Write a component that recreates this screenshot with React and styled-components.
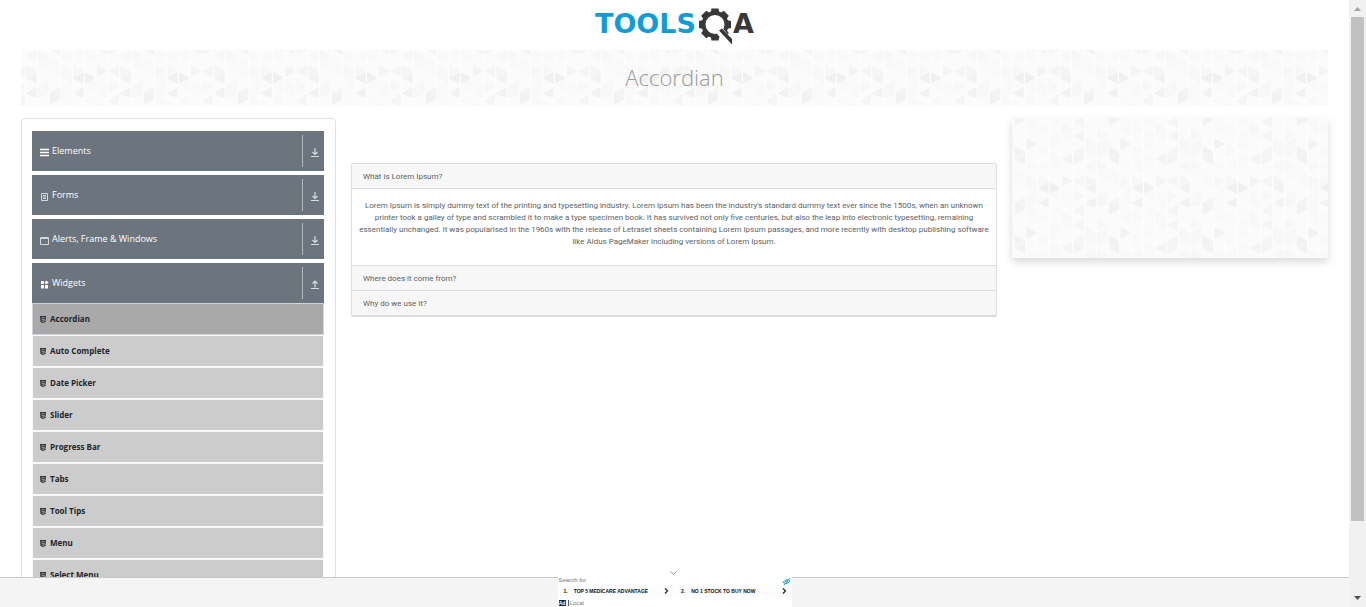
import React, { useId, useState } from "react";
import styled, { createGlobalStyle } from "styled-components";

const GlobalStyle = createGlobalStyle`
  * { box-sizing: border-box; }
  body {
    margin: 0;
    background: #fff;
    color: #212529;
    font-family: "Open Sans", "Noto Sans", sans-serif;
    font-size: 8px;
    line-height: 12px;
  }
  button { font: inherit; color: inherit; border: 0; cursor: pointer; }
  ul, ol { list-style: none; margin: 0; padding: 0; }
  a { color: inherit; text-decoration: none; }
`;

const Shell = styled.div`
  display: flex;
  flex-direction: column;
  height: 100vh;
  position: relative;
  padding-right: 17px;
`;

const Viewport = styled.div`
  flex: 1;
  min-height: 0;
  overflow: hidden;
  padding: 0 21px;
`;

const Header = styled.header`
  display: flex;
  justify-content: center;
  height: 50px;
  padding-top: 5px;
`;

const Banner = styled.div`
  position: relative;
  display: flex;
  align-items: center;
  justify-content: center;
  height: 56px;
  padding-bottom: 2px;
  margin-bottom: 12px;
`;

const Title = styled.h1`
  position: relative;
  margin: 0;
  font-size: 22px;
  line-height: 32px;
  font-weight: 300;
  color: #999;
`;

const PatternSvg = styled.svg`
  position: absolute;
  inset: 0;
  width: 100%;
  height: 100%;
`;

const Columns = styled.div`
  display: grid;
  grid-template-columns: minmax(0, 315fr) minmax(0, 646fr) minmax(0, 316fr);
  gap: 15px;
  align-items: start;
`;

const Sidebar = styled.nav`
  border: 1px solid #dee2e6;
  border-radius: 4px;
  padding: 12px 11px 12px 10px;
  display: flex;
  flex-direction: column;
  gap: 4px;
`;

const GroupButton = styled.button`
  display: flex;
  align-items: center;
  width: 100%;
  height: 40px;
  padding: 0 4px 0 8px;
  background: #6c757d;
  color: #fff;
  font-size: 9px;
  font-weight: 500;
  line-height: 16px;
  text-align: left;
`;

const GroupIcon = styled.svg`
  width: 9px;
  height: 9px;
  margin: 2px 3px 0 0;
  flex: none;
`;

const GroupLabel = styled.span`
  flex: 1;
`;

const Toggle = styled.span`
  display: flex;
  align-items: center;
  justify-content: flex-end;
  width: 18px;
  height: 32px;
  padding-top: 4px;
  border-left: 1px solid #b5babe;
`;

const MenuList = styled.ul`
  background: #f8f9fa;
  border-top: 1px solid #d3d9df;
  padding: 0 1px;
`;

const MenuLink = styled.a`
  display: flex;
  align-items: center;
  gap: 4px;
  height: 30px;
  margin-bottom: 2px;
  padding-left: 7px;
  font-weight: 700;
  background: ${(p) => (p.$active ? "#a9a9a9" : "#ccc")};
  box-shadow: ${(p) => (p.$active ? "0 0 0 1px #ced4da" : "none")};
`;

const Main = styled.main`
  padding-top: 45px;
`;

const Accordion = styled.div`
  border: 1px solid #dcdddd;
  border-bottom-width: 2px;
  border-radius: 2px;
  color: #5c5f62;
  font-family: Roboto, sans-serif;
`;

const PanelButton = styled.button`
  display: block;
  width: 100%;
  height: ${(p) => (p.$first ? "24px" : "25px")};
  padding: 2px 11px 0;
  text-align: left;
  background: #f7f7f7;
  border-top: ${(p) => (p.$first ? "0" : "1px solid #dcdddd")};
`;

const PanelBody = styled.div`
  border-top: 1px solid #dcdddd;
  padding: 11px 4px 17px;
  text-align: center;
  p { margin: 0; }
`;

const AdCard = styled.aside`
  position: relative;
  height: 140px;
  box-shadow: 0 4px 8px rgba(0, 0, 0, 0.15);
`;

const AdBar = styled.footer`
  position: relative;
  display: flex;
  justify-content: center;
  height: 30px;
  background: #f4f4f4;
  border-top: 1px solid #c9c9c9;
`;

const AdBox = styled.div`
  display: flex;
  flex-direction: column;
  width: 234px;
  height: 30px;
  margin-top: -1px;
  padding-left: 1px;
  background: #fff;
  font-family: "Liberation Sans", sans-serif;
  font-size: 6px;
  line-height: 6px;
`;

const AdTop = styled.div`
  display: flex;
  justify-content: space-between;
  height: 8px;
  padding-right: 1px;
  color: #777;
`;

const AdLinks = styled.ol`
  display: grid;
  grid-template-columns: 1fr 1fr;
  gap: 2px;
  height: 14px;
`;

const AdLink = styled.a`
  display: flex;
  align-items: center;
  gap: 6px;
  height: 12px;
  padding: 0 5px;
  background: #fcfcfd;
  color: #111;
  font-size: 5px;
  font-weight: 700;
  white-space: nowrap;
  svg { margin-left: auto; }
`;

const AdBottom = styled.div`
  display: flex;
  align-items: center;
  gap: 2px;
  height: 8px;
  color: #777;
`;

const AdBadge = styled.span`
  width: 7px;
  height: 6px;
  background: #10295a;
  color: #fff;
  font-size: 5px;
  line-height: 6px;
  font-weight: 700;
  text-align: center;
`;

const AdSource = styled.span`
  border-left: 1px solid #555;
  padding-left: 1px;
  line-height: 6px;
`;

const Collapse = styled.button`
  position: absolute;
  bottom: 30px;
  left: 50%;
  width: 10px;
  height: 8px;
  margin-left: -6px;
  padding: 0;
  background: #fff;
  display: grid;
  place-items: center;
`;

const Track = styled.div`
  position: absolute;
  top: 0;
  right: 0;
  bottom: 0;
  width: 17px;
  display: grid;
  grid-template-rows: 17px 1fr 17px;
  justify-items: center;
  background: #f1f1f1;
`;

const Thumb = styled.div`
  width: 13px;
  height: 88%;
  background: #c1c1c1;
`;

const COL = 11.75;
/* column, centre y, direction, darkness */
const FACETS = [
  [0, 34, "R", 5], [0, 41, "L", 5], [0, -4, "L", 4], [0, 2, "R", 5], [0, 85, "L", 4], [0, 91, "R", 5],
  [1, 26, "R", 5], [2, 70, "L", 6], [3, 70, "R", 6], [2, 85, "L", 5], [6, 70, "L", 5], [6, 85, "L", 5],
  [4, 63, "R", 4], [4, 41, "L", 4], [5, 34, "L", 3], [5, 41, "R", 4], [5, 4, "L", 3], [5, 18, "L", 3],
  [5, 63, "L", 3], [6, 63, "R", 3], [5, 92, "L", 3], [7, 17, "R", 2], [6, 26, "R", 2], [6, 33, "L", 2],
  [7, 26, "L", 2], [7, 33, "R", 2], [1, 4, "R", 1], [1, 11, "L", 1], [2, 11, "R", 1], [3, 4, "L", 1],
  [3, 18, "L", 1], [4, 11, "R", 2], [4, 18, "L", 1], [3, 26, "R", 1], [2, 33, "R", 1], [2, 48, "L", 1],
  [3, 41, "R", 1], [1, 48, "R", 1], [3, 48, "L", 1], [6, 48, "L", 2], [7, 48, "R", 2], [7, 56, "L", 1],
  [1, 63, "R", 2], [2, 63, "R", 2], [1, 70, "L", 1], [4, 78, "R", 1], [5, 78, "R", 2], [3, 78, "L", 1],
  [4, 85, "L", 1], [7, 78, "L", 2], [7, 85, "R", 2], [0, 56, "R", 1], [0, 63, "L", 1], [1, 85, "R", 1], [1, 78, "L", 1],
];

function FacetPattern({ x, y }) {
  const id = useId();
  return (
    <PatternSvg aria-hidden="true">
      <defs>
        <pattern id={id} x={x} y={y} width="94" height="89" patternUnits="userSpaceOnUse">
          <rect width="94" height="89" fill="#fbfbfb" />
          {FACETS.map(([c, cy, dir, dark], i) => {
            const near = c * COL + 1;
            const far = near + 10;
            const flat = dir === "R" ? near : far;
            const tip = dir === "R" ? far : near;
            return (
              <path
                key={i}
                d={`M${flat} ${cy - 5.5}L${tip} ${cy}L${flat} ${cy + 5.5}Z`}
                fill="#000"
                stroke="#000"
                strokeWidth=".5"
                strokeLinejoin="round"
                opacity={0.003 + dark * 0.0065}
              />
            );
          })}
          {[0, 1, 2, 3, 4, 5, 6, 7].map((c) => (
            <path key={c} d={`M${c * COL} 0V89`} stroke="#fff" opacity="0.5" />
          ))}
        </pattern>
      </defs>
      <rect width="100%" height="100%" fill={`url(#${id})`} />
    </PatternSvg>
  );
}

function Logo() {
  return (
    <svg width="162" height="42" viewBox="0 0 162 42" role="img" aria-label="TOOLSQA">
      <g fontFamily="DejaVu Sans" fontWeight="700" fontSize="27">
        <text x="1" y="28" fill="#109cdb">TOOLS</text>
        <text x="139" y="28" fill="#38383a">A</text>
      </g>
      <g fill="#38383a">
        {[0, 45, 90, 135, 180, 225, 270, 315].map((a) => (
          <path key={a} d="M116.500 8L117.500 3.500H124.500L125.500 8Z" transform={`rotate(${a} 121 19.5)`} />
        ))}
      </g>
      <circle cx="121" cy="19.5" r="11.5" fill="#fff" stroke="#38383a" strokeWidth="4" />
      <path d="M125 25L136 38" stroke="#fff" strokeWidth="8" />
      <path d="M125 25.500L128 23.500L138 34V39.500Z" fill="#38383a" />
    </svg>
  );
}

const GROUP_ICONS = {
  Elements: <path d="M0 1.500H9M0 4.500H9M0 7.500H9" stroke="#fff" strokeWidth="1.500" />,
  Forms: <path d="M1.500 1.500H7.500V8.500H1.500ZM3 3.500H6M3 5H6M3 6.500H6" stroke="#d5d8da" fill="none" />,
  "Alerts, Frame & Windows": (
    <path d="M.5 1.500H8.500V8.500H.5ZM.5 2.500H8.500" stroke="#d5d8da" fill="none" />
  ),
  Widgets: <path d="M1 1H4V4H1ZM1 5H4V8.500H1ZM5 5H8V8.500H5ZM6.500 .5L8.500 2.500L6.500 4.500L4.500 2.500Z" fill="#fff" />,
};

function Group({ name, open, onClick, children }) {
  return (
    <div>
      <GroupButton type="button" aria-expanded={open} onClick={onClick}>
        <GroupIcon viewBox="0 0 9 9" aria-hidden="true">{GROUP_ICONS[name]}</GroupIcon>
        <GroupLabel>{name}</GroupLabel>
        <Toggle>
          <svg width="10" height="10" viewBox="0 0 10 10" fill="none" stroke="#d8dbdd" aria-hidden="true">
            <path d={open ? "M5 7.500V1M2.500 3.500L5 1L7.500 3.500" : "M5 0V6.500M2.500 4L5 6.500L7.500 4"} strokeWidth="1.200" />
            <path d="M1 8.500H9" />
          </svg>
        </Toggle>
      </GroupButton>
      {open && children}
    </div>
  );
}

const WIDGETS = ["Accordian", "Auto Complete", "Date Picker", "Slider", "Progress Bar", "Tabs", "Tool Tips", "Menu", "Select Menu"];

const PANELS = [
  {
    title: "What is Lorem Ipsum?",
    text: "Lorem Ipsum is simply dummy text of the printing and typesetting industry. Lorem Ipsum has been the industry's standard dummy text ever since the 1500s, when an unknown printer took a galley of type and scrambled it to make a type specimen book. It has survived not only five centuries, but also the leap into electronic typesetting, remaining essentially unchanged. It was popularised in the 1960s with the release of Letraset sheets containing Lorem Ipsum passages, and more recently with desktop publishing software like Aldus PageMaker including versions of Lorem Ipsum.",
  },
  { title: "Where does it come from?" },
  { title: "Why do we use it?" },
];

export default function App() {
  const [group, setGroup] = useState("Widgets");
  return (
    <Shell>
      <GlobalStyle />
      <Viewport>
        <Header><a href="#home"><Logo /></a></Header>
        <Banner>
          <FacetPattern x="28" y="-42" />
          <Title>Accordian</Title>
        </Banner>
        <Columns>
          <Sidebar>
            {Object.keys(GROUP_ICONS).map((name) => (
              <Group key={name} name={name} open={group === name} onClick={() => setGroup(name)}>
                <MenuList>
                  {WIDGETS.map((item, i) => (
                    <li key={item}>
                      <MenuLink href={"#" + item} $active={i === 0}>
                        <svg width="6" height="7" viewBox="0 0 6 7" aria-hidden="true">
                          <path d="M0 0H6L5.500 6L3 7L.5 6Z" fill="#303336" />
                          <path d="M1.500 1.700H4.600M1.700 3.400H4.300V5L3 5.400L1.700 5" stroke="#ccc" strokeWidth=".7" fill="none" />
                        </svg>
                        {item}
                      </MenuLink>
                    </li>
                  ))}
                </MenuList>
              </Group>
            ))}
          </Sidebar>
          <Main>
            <Accordion>
              {PANELS.map((p, i) => (
                <section key={p.title}>
                  <PanelButton type="button" $first={i === 0} aria-expanded={!!p.text}>{p.title}</PanelButton>
                  {p.text && <PanelBody><p>{p.text}</p></PanelBody>}
                </section>
              ))}
            </Accordion>
          </Main>
          <AdCard><FacetPattern x="2" y="0" /></AdCard>
        </Columns>
      </Viewport>
      <AdBar>
        <Collapse type="button" aria-label="Collapse">
          <svg width="7" height="4" viewBox="0 0 7 4" fill="none" stroke="#999"><path d="M.5 .5L3.500 3.500L6.500 .5" /></svg>
        </Collapse>
        <AdBox>
          <AdTop>
            Search for
            <svg width="9" height="9" viewBox="0 0 9 9" fill="none" stroke="#21a9c4" aria-hidden="true">
              <path d="M1 5.500Q4 1 8 3.500Q6 8 1 5.500M2 8L8 1" /><circle cx="4.500" cy="4.700" r="1" />
            </svg>
          </AdTop>
          <AdLinks>
            {["TOP 5 MEDICARE ADVANTAGE", "NO 1 STOCK TO BUY NOW"].map((t, i) => (
              <li key={t}>
                <AdLink href="#ad">
                  <span>{i + 1}.</span>
                  <span>{t}</span>
                  <svg width="5" height="6" viewBox="0 0 5 6" fill="none" stroke="#222"><path d="M1 .5L3.500 3L1 5.500" strokeWidth="1.200" /></svg>
                </AdLink>
              </li>
            ))}
          </AdLinks>
          <AdBottom><AdBadge>Ad</AdBadge><AdSource>Local</AdSource></AdBottom>
        </AdBox>
      </AdBar>
      <Track aria-hidden="true">
        <svg width="17" height="17"><path d="M5 11H12L8.500 7Z" fill="#a3a3a3" /></svg>
        <Thumb />
        <svg width="17" height="17"><path d="M5 6H12L8.500 10Z" fill="#505050" /></svg>
      </Track>
    </Shell>
  );
}
